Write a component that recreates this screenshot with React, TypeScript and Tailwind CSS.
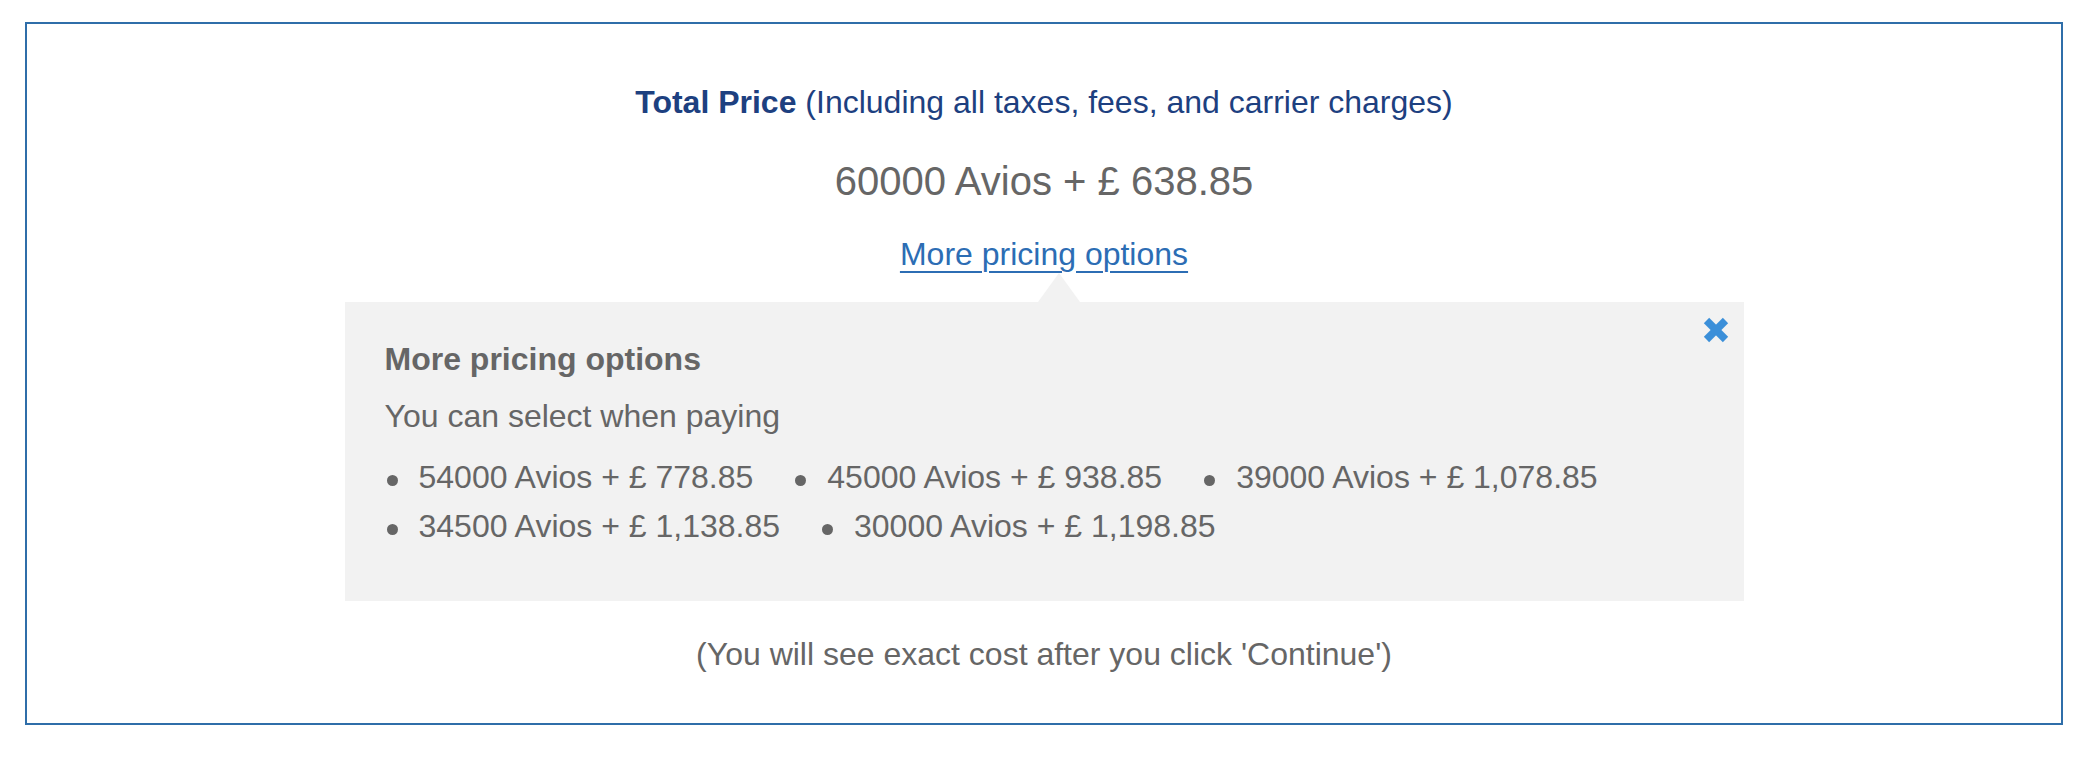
import React from "react";

const options = [
  "54000 Avios + £ 778.85",
  "45000 Avios + £ 938.85",
  "39000 Avios + £ 1,078.85",
  "34500 Avios + £ 1,138.85",
  "30000 Avios + £ 1,198.85",
];

export default function App() {
  return (
    <div className="w-[2086px] h-[758px] bg-white font-['Liberation_Sans',Arial,Helvetica,sans-serif] pt-[22px]">
      <div className="ml-[25px] mr-[23px] h-[703px] border-2 border-[#2f6ea9] pt-[54px] pb-[45px] flex flex-col items-center">
        <div className="text-[32px] leading-[48px] text-[#1d4080] text-center">
          <span className="font-bold">Total Price</span> (Including all taxes, fees, and carrier charges)
        </div>
        <div className="mt-[25px] text-[40px] leading-[60px] text-[#666666] text-center">
          60000 Avios + £ 638.85
        </div>
        <a
          href="#"
          className="mt-[19px] text-[32px] leading-[48px] text-[#2c6db4] underline underline-offset-[6px] decoration-[2px]"
        >
          More pricing options
        </a>
        <div className="relative mt-[24px] w-[1399px] bg-[#f2f2f2] pl-[40px] pr-[40px] pt-[33px] pb-[50px] text-[#666666]">
          <div className="absolute left-[693px] -top-[29px] w-0 h-0 border-l-[21px] border-r-[21px] border-b-[29px] border-l-transparent border-r-transparent border-b-[#f2f2f2]" />
          <button className="absolute right-[15px] top-[15px] w-[26px] h-[26px]" aria-label="Close">
            <svg width="26" height="26" viewBox="0 0 26 26">
              <line x1="3.5" y1="3.5" x2="22.5" y2="22.5" stroke="#3b8fd9" strokeWidth="7.5" strokeLinecap="butt" />
              <line x1="22.5" y1="3.5" x2="3.5" y2="22.5" stroke="#3b8fd9" strokeWidth="7.5" strokeLinecap="butt" />
            </svg>
          </button>
          <div className="text-[32px] leading-[48px] font-bold">More pricing options</div>
          <div className="mt-[9px] text-[32px] leading-[48px]">You can select when paying</div>
          <ul className="mt-[13px] flex flex-wrap gap-x-[40px]">
            {options.map((o) => (
              <li key={o} className="flex items-center text-[32px] leading-[49px]">
                <span className="ml-[2px] mt-[5px] w-[11px] h-[11px] rounded-full bg-[#666666]" />
                <span className="ml-[21px]">{o}</span>
              </li>
            ))}
          </ul>
        </div>
        <div className="mt-[29px] text-[32px] leading-[48px] text-[#666666] text-center">
          (You will see exact cost after you click 'Continue')
        </div>
      </div>
    </div>
  );
}
